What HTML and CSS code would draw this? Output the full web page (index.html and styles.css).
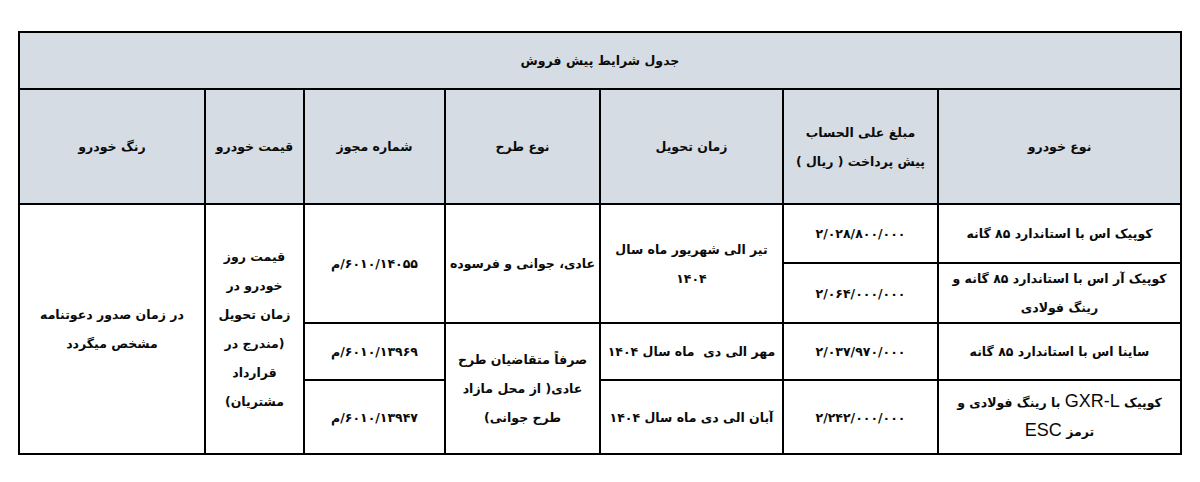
FILE: index.html
```html
<!DOCTYPE html>
<html lang="fa" dir="rtl">
<head>
<meta charset="utf-8">
<title>جدول شرایط پیش فروش</title>
<link rel="stylesheet" href="styles.css">
</head>
<body>
<table class="sale">
  <colgroup>
    <col class="c-car">
    <col class="c-pay">
    <col class="c-time">
    <col class="c-plan">
    <col class="c-permit">
    <col class="c-price">
    <col class="c-color">
  </colgroup>
  <tr class="r-title">
    <th colspan="7" class="head">جدول شرایط پیش فروش</th>
  </tr>
  <tr class="r-head">
    <th class="head">نوع خودرو</th>
    <th class="head">مبلغ علی الحساب<br>پیش پرداخت ( ریال )</th>
    <th class="head">زمان تحویل</th>
    <th class="head">نوع طرح</th>
    <th class="head">شماره مجوز</th>
    <th class="head">قیمت خودرو</th>
    <th class="head">رنگ خودرو</th>
  </tr>
  <tr class="r1">
    <td>کوپیک اس با استاندارد ۸۵ گانه</td>
    <td>۲/۰۲۸/۸۰۰/۰۰۰</td>
    <td rowspan="2">تیر الی شهریور ماه سال<br>۱۴۰۴</td>
    <td rowspan="2">عادی، جوانی و فرسوده</td>
    <td rowspan="2">۶۰۱۰/۱۴۰۵۵/م</td>
    <td rowspan="4" class="price">قیمت روز<br>خودرو در<br>زمان تحویل<br>(مندرج در<br>قرارداد<br>مشتریان)</td>
    <td rowspan="4">در زمان صدور دعوتنامه<br>مشخص میگردد</td>
  </tr>
  <tr class="r2">
    <td>کوپیک آر اس با استاندارد ۸۵ گانه و<br>رینگ فولادی</td>
    <td>۲/۰۶۴/۰۰۰/۰۰۰</td>
  </tr>
  <tr class="r3">
    <td>ساینا اس با استاندارد ۸۵ گانه</td>
    <td>۲/۰۳۷/۹۷۰/۰۰۰</td>
    <td>مهر الی دی&nbsp; ماه سال ۱۴۰۴</td>
    <td rowspan="2">صرفاً متقاضیان طرح<br>عادی( از محل مازاد<br>طرح جوانی)</td>
    <td>۶۰۱۰/۱۳۹۶۹/م</td>
  </tr>
  <tr class="r4">
    <td class="tight">کوپیک <span class="lat">GXR-L</span> با رینگ فولادی و<br>ترمز <span class="lat">ESC</span></td>
    <td>۲/۲۴۲/۰۰۰/۰۰۰</td>
    <td>آبان الی دی ماه سال ۱۴۰۴</td>
    <td>۶۰۱۰/۱۳۹۴۷/م</td>
  </tr>
</table>
</body>
</html>
```
FILE: styles.css
```css
html, body {
  margin: 0;
  padding: 0;
  background: #ffffff;
}

body {
  font-family: "DejaVu Sans", "Noto Sans", sans-serif;
  color: #000000;
}

.sale {
  border-collapse: collapse;
  table-layout: fixed;
  width: 1164px;
  margin: 31px 0 0 0;
  margin-right: 18px;
  font-size: 12.5px;
  font-weight: bold;
  direction: rtl;
}

.sale th,
.sale td {
  border: 2px solid #000000;
  padding: 0 2px;
  text-align: center;
  vertical-align: middle;
  line-height: 29px;
  font-weight: bold;
  color: #0a0a0a;
}

.head {
  background: #d6dce4;
}

.c-car { width: 243px; }
.c-pay { width: 155px; }
.c-time { width: 183px; }
.c-plan { width: 155px; }
.c-permit { width: 141px; }
.c-price { width: 99px; }
.c-color { width: 186px; }

.r-title { height: 57px; }
.r-head { height: 115px; }
.r1 { height: 59px; }
.r2 { height: 58px; }
.r3 { height: 57px; }
.r4 { height: 74px; }

.tight {
  line-height: 26px;
}

.lat {
  font-family: "Liberation Sans", Arial, sans-serif;
  font-size: 18px;
  font-weight: normal;
  line-height: 20px;
}
```
